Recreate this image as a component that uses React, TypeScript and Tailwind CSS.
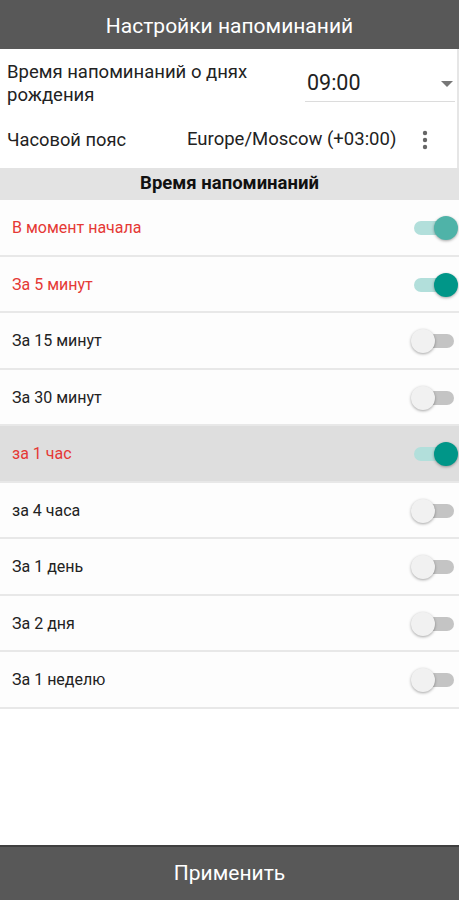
import { useState } from 'react';

interface Reminder {
  label: string;
  on: boolean;
}

const initial: Reminder[] = [
  { label: 'В момент начала', on: true },
  { label: 'За 5 минут', on: true },
  { label: 'За 15 минут', on: false },
  { label: 'За 30 минут', on: false },
  { label: 'за 1 час', on: true },
  { label: 'за 4 часа', on: false },
  { label: 'За 1 день', on: false },
  { label: 'За 2 дня', on: false },
  { label: 'За 1 неделю', on: false },
];

function Toggle({ on, soft, onClick }: { on: boolean; soft?: boolean; onClick: () => void }) {
  return (
    <button onClick={onClick} className="relative w-[47px] h-[26px] flex items-center shrink-0">
      <span className={`absolute left-[3px] right-[4px] h-[14px] rounded-full ${on ? 'bg-[#b2dfdb]' : 'bg-[#c4c4c4]'}`} />
      <span
        className={`absolute w-[24px] h-[24px] rounded-full shadow-[0_1px_3px_rgba(0,0,0,0.35)]
          ${on ? (soft ? 'right-0 bg-[#4fb3a8]' : 'right-0 bg-[#009688]') : 'left-0 bg-[#f1f1f1]'}`}
      />
    </button>
  );
}

export default function App() {
  const [items, setItems] = useState(initial);

  const toggle = (i: number) => setItems(items.map((it, j) => (j === i ? { ...it, on: !it.on } : it)));

  return (
    <div className="w-[459px] h-[900px] flex flex-col bg-white font-['Roboto',sans-serif]">
      <header className="h-[49px] bg-[#585858] flex items-center justify-center pt-[4px] shrink-0">
        <h1 className="text-white text-[21px]">Настройки напоминаний</h1>
      </header>

      {/* Top settings */}
      <div className="h-[119px] border-r-2 border-[#e6e6e6] shrink-0">
        <div className="flex items-start pt-[12px]">
          <p className="w-[298px] pl-[7px] text-[18.5px] leading-[23px] text-[#222]">
            Время напоминаний о днях рождения
          </p>
          <div className="ml-[7px] w-[150px] h-[41px] border-b border-[#dcdcdc] flex items-center justify-between pt-[4px]">
            <span className="ml-[2px] text-[21.5px] text-[#222]">09:00</span>
            <svg width="12" height="6" viewBox="0 0 12 6" className="mr-[2px] mt-[2px]">
              <path d="M0 0 L12 0 L6 6 Z" fill="#777" />
            </svg>
          </div>
        </div>
        <div className="flex items-center h-[40px] mt-[13px]">
          <span className="w-[187px] pl-[7px] text-[18.3px] text-[#222]">Часовой пояс</span>
          <span className="text-[18.5px] text-[#222]">Europe/Moscow (+03:00)</span>
          <svg width="6" height="20" viewBox="0 0 6 20" className="ml-[26px]">
            <circle cx="3" cy="3" r="2.2" fill="#666" />
            <circle cx="3" cy="10" r="2.2" fill="#666" />
            <circle cx="3" cy="17" r="2.2" fill="#666" />
          </svg>
        </div>
      </div>

      <div className="h-[32px] bg-[#e3e3e3] flex items-center justify-center shrink-0">
        <span className="font-bold text-[18.5px] text-[#111]">Время напоминаний</span>
      </div>

      <ul className="flex-1">
        {items.map((it, i) => (
          <li
            key={it.label}
            className={`h-[56.5px] flex items-center justify-between pl-[12px] pr-[1px] pt-[2px] border-b-2 border-[#e8e8e8]
              ${i === 4 ? 'bg-[#dedede]' : 'bg-[#fdfdfd]'}`}
          >
            <span className={`text-[16px] ${it.on ? 'text-[#e53935]' : 'text-[#222]'}`}>{it.label}</span>
            <Toggle on={it.on} soft={i === 0} onClick={() => toggle(i)} />
          </li>
        ))}
      </ul>

      <button className="h-[55px] bg-[#585858] text-white text-[21px] shrink-0 border-t-2 border-[#3f3f3f]">
        Применить
      </button>
    </div>
  );
}
